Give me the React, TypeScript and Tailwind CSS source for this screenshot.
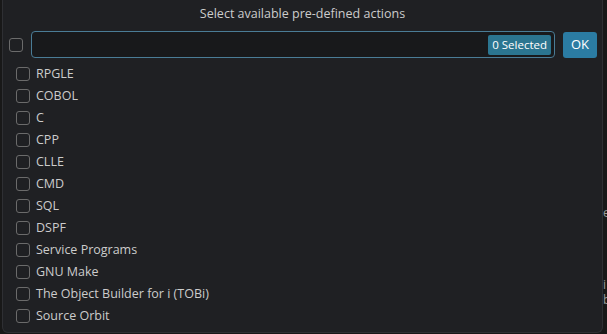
import React from "react";

const items = [
  "RPGLE",
  "COBOL",
  "C",
  "CPP",
  "CLLE",
  "CMD",
  "SQL",
  "DSPF",
  "Service Programs",
  "GNU Make",
  "The Object Builder for i (TOBi)",
  "Source Orbit",
];

export default function App() {
  return (
    <div
      className="relative w-[607px] h-[334px] overflow-hidden bg-[#181818] text-[#cccccc]"
      style={{ fontFamily: '"Open Sans", "Noto Sans", sans-serif' }}
    >
      {/* editor text fragments behind */}
      <div className="absolute left-[603px] top-[206px] w-[4px] overflow-hidden text-[12px] leading-[13px] text-[#9a9a9a]">e</div>
      <div className="absolute left-[603px] top-[278px] w-[4px] overflow-hidden text-[12px] leading-[13px] text-[#9a9a9a]">i</div>
      <div className="absolute left-[603px] top-[293px] w-[4px] overflow-hidden text-[12px] leading-[13px] text-[#9a9a9a]">b</div>

      <div className="absolute left-[2px] top-0 w-[601px] h-[333px] bg-[#1f2023] border-l border-r border-b border-[#2e2f33] rounded-b-[6px]">
        <div className="h-[29px] flex items-center justify-center text-[12.5px] text-[#cccccc]">
          Select available pre-defined actions
        </div>
        <div className="flex items-center h-[31px] pl-[6px] pr-[5px]">
          <div className="w-[14px] h-[14px] rounded-[3px] border border-[#6b6b6b] bg-[#1f2023]" />
          <div className="ml-[8px] flex-1 h-[27px] rounded-[4px] border border-[#4a7c96] bg-[#18191b] flex items-center justify-end pr-[3px]">
            <div className="h-[20px] px-[4px] rounded-[2px] bg-[#2b7590] text-white text-[11.5px] flex items-center">
              0 Selected
            </div>
          </div>
          <div className="ml-[8px] w-[34px] h-[26px] rounded-[3px] bg-[#2b7ca3] text-white text-[13px] flex items-center justify-center">
            OK
          </div>
        </div>
        <div className="mt-[3px] flex flex-col">
          {items.map((t) => (
            <div key={t} className="h-[22px] flex items-center pl-[13px]">
              <div className="w-[14px] h-[14px] rounded-[3px] border border-[#6b6b6b]" />
              <span className="ml-[6px] text-[12.5px] text-[#cccccc]">{t}</span>
            </div>
          ))}
        </div>
      </div>
    </div>
  );
}
